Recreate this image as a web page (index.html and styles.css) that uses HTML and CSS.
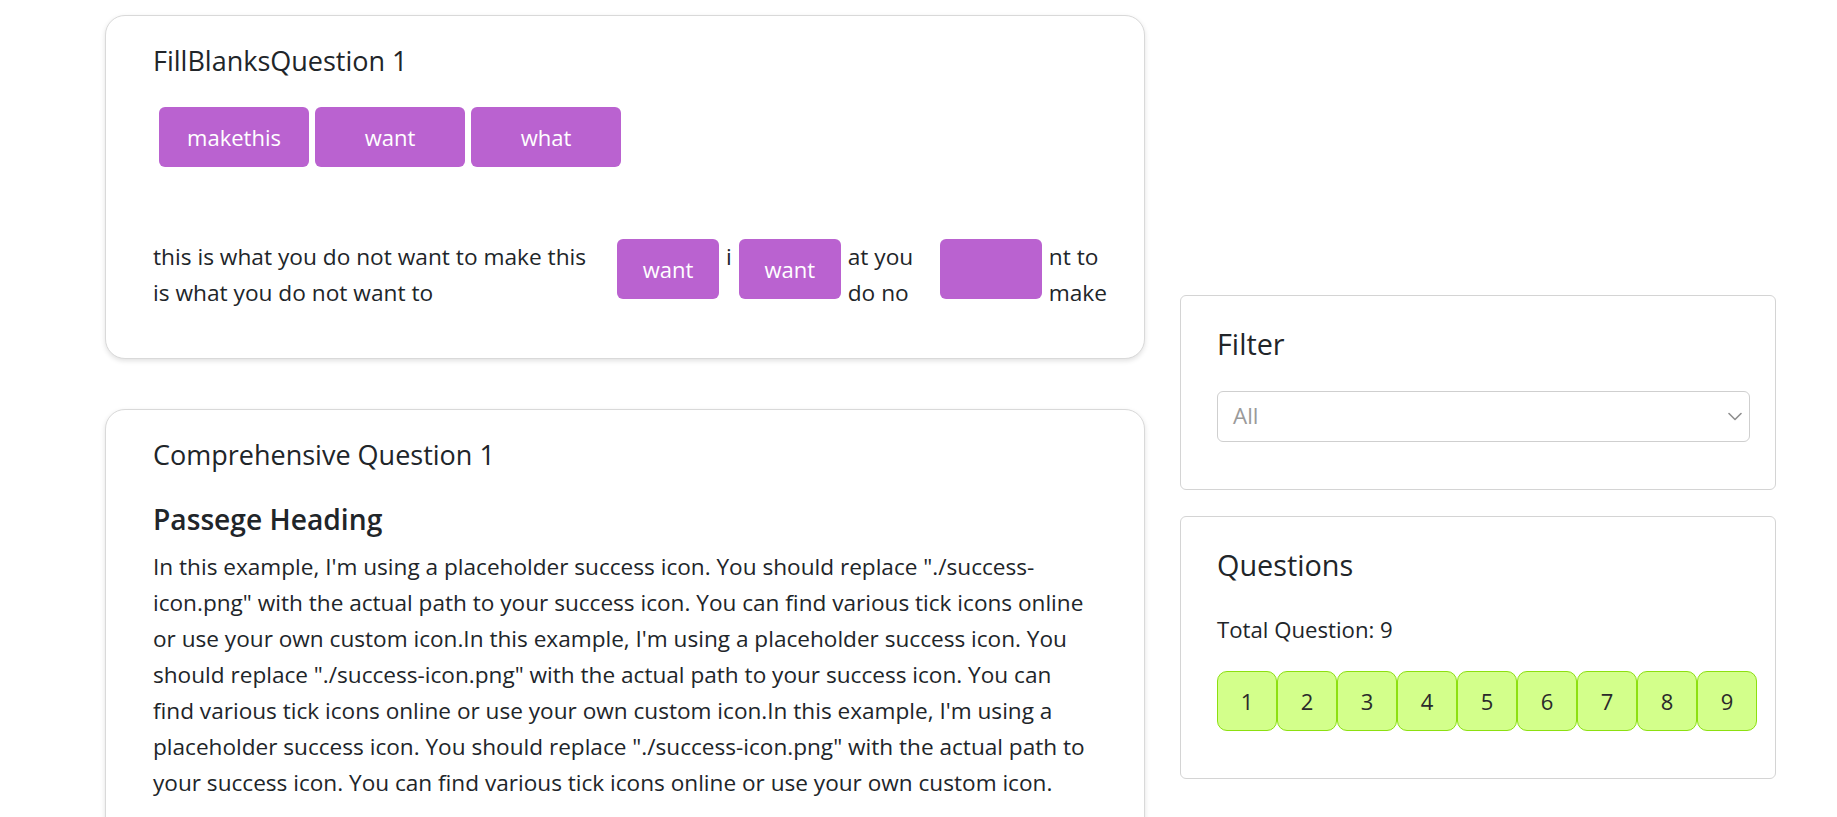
FILE: index.html
```html
<!DOCTYPE html>
<html lang="en">
<head>
<meta charset="utf-8">
<title>Questions</title>
<link rel="stylesheet" href="styles.css">
</head>
<body>
<div class="page">
  <main class="main-col">
    <section class="q-card">
      <h3 class="q-title">FillBlanksQuestion 1</h3>
      <div class="word-bank">
        <div class="chip">makethis</div>
        <div class="chip">want</div>
        <div class="chip">what</div>
      </div>
      <div class="sentence">
        <span class="seg seg-a">this is what you do not want to make this is what you do not want to</span>
        <div class="blank">want</div>
        <span class="seg">i</span>
        <div class="blank">want</div>
        <span class="seg seg-b">at you do no</span>
        <div class="blank"></div>
        <span class="seg seg-c">nt to make</span>
      </div>
    </section>

    <section class="q-card">
      <h3 class="q-title">Comprehensive Question 1</h3>
      <h4 class="passage-heading">Passege Heading</h4>
      <p class="passage">In this example, I'm using a placeholder success icon. You should replace "./success-icon.png" with the actual path to your success icon. You can find various tick icons online or use your own custom icon.In this example, I'm using a placeholder success icon. You should replace "./success-icon.png" with the actual path to your success icon. You can find various tick icons online or use your own custom icon.In this example, I'm using a placeholder success icon. You should replace "./success-icon.png" with the actual path to your success icon. You can find various tick icons online or use your own custom icon.</p>
    </section>
  </main>

  <aside class="side-col">
    <section class="side-card">
      <h2 class="side-title">Filter</h2>
      <div class="select">
        <span class="select-value">All</span>
        <svg class="chevron" width="14" height="9" viewBox="0 0 14 9" aria-hidden="true">
          <path d="M1 1.5 L7 7.5 L13 1.5" fill="none" stroke="#8f8f8f" stroke-width="1.6" stroke-linecap="round" stroke-linejoin="round"/>
        </svg>
      </div>
    </section>

    <section class="side-card">
      <h2 class="side-title">Questions</h2>
      <p class="total">Total Question: 9</p>
      <div class="nums">
        <div class="num">1</div>
        <div class="num">2</div>
        <div class="num">3</div>
        <div class="num">4</div>
        <div class="num">5</div>
        <div class="num">6</div>
        <div class="num">7</div>
        <div class="num">8</div>
        <div class="num">9</div>
      </div>
    </section>
  </aside>
</div>
</body>
</html>
```
FILE: styles.css
```css
* { box-sizing: border-box; }

html, body {
  margin: 0;
  padding: 0;
  background: #ffffff;
}

body {
  font-family: "Open Sans", "Noto Sans", sans-serif;
  color: #212529;
  font-size: 22.6px;
  line-height: 36px;
}

.page {
  display: flex;
  align-items: flex-start;
  gap: 35px;
  padding: 15px 0 0 105px;
}

.main-col {
  width: 1040px;
  display: flex;
  flex-direction: column;
  gap: 50px;
}

.q-card {
  background: #fff;
  border: 1px solid #d9d9d9;
  border-radius: 20px;
  box-shadow: 0 2px 5px rgba(0, 0, 0, 0.12);
  padding: 29px 47px 47px 47px;
}

.q-title {
  margin: 0;
  font-size: 27px;
  font-weight: 400;
  line-height: 1.2;
}

.word-bank {
  display: flex;
  gap: 6px;
  margin: 30px 0 0 6px;
}

.chip {
  width: 150px;
  height: 60px;
  border-radius: 6px;
  background: #ba62d0;
  color: #fff;
  font-size: 22px;
  display: flex;
  align-items: center;
  justify-content: center;
}

.sentence {
  display: flex;
  align-items: flex-start;
  gap: 7px;
  margin-top: 72px;
  font-size: 22.7px;
  line-height: 36px;
}

.seg { flex: none; }
.seg-a { width: 457px; padding-right: 10px; }
.seg-b { width: 85px; }
.seg-c { width: 60px; }

.blank {
  flex: none;
  width: 102px;
  height: 60px;
  border-radius: 6px;
  background: #ba62d0;
  color: #fff;
  font-size: 22px;
  display: flex;
  align-items: center;
  justify-content: center;
}

.passage-heading {
  margin: 30px 0 0;
  font-size: 28.2px;
  font-weight: 600;
  line-height: 34px;
}

.passage {
  margin: 13px 0 0;
  font-size: 22.6px;
  line-height: 36px;
}

.side-col {
  width: 596px;
  margin-top: 280px;
  display: flex;
  flex-direction: column;
  gap: 26px;
}

.side-card {
  border: 1px solid #d4d4d4;
  border-radius: 6px;
  padding: 31px 25px 47px 36px;
  background: #fff;
}

.side-title {
  margin: 0;
  font-size: 28.8px;
  font-weight: 400;
  line-height: 1.2;
}

.select {
  margin-top: 29px;
  height: 51px;
  border: 1px solid #cfcfcf;
  border-radius: 6px;
  display: flex;
  align-items: center;
  justify-content: space-between;
  padding: 0 7px 0 15px;
}

.select-value {
  color: #9a9a9a;
  font-size: 22.4px;
}

.chevron { display: block; }

.total {
  margin: 30px 0 0;
  font-size: 22.2px;
  line-height: 36px;
}

.nums {
  display: flex;
  margin-top: 23px;
}

.num {
  flex: none;
  width: 60px;
  height: 60px;
  border: 1px solid #8ce010;
  border-radius: 10px;
  background: #d3ff8b;
  color: #2a2a2a;
  font-size: 22px;
  display: flex;
  align-items: center;
  justify-content: center;
}
```
